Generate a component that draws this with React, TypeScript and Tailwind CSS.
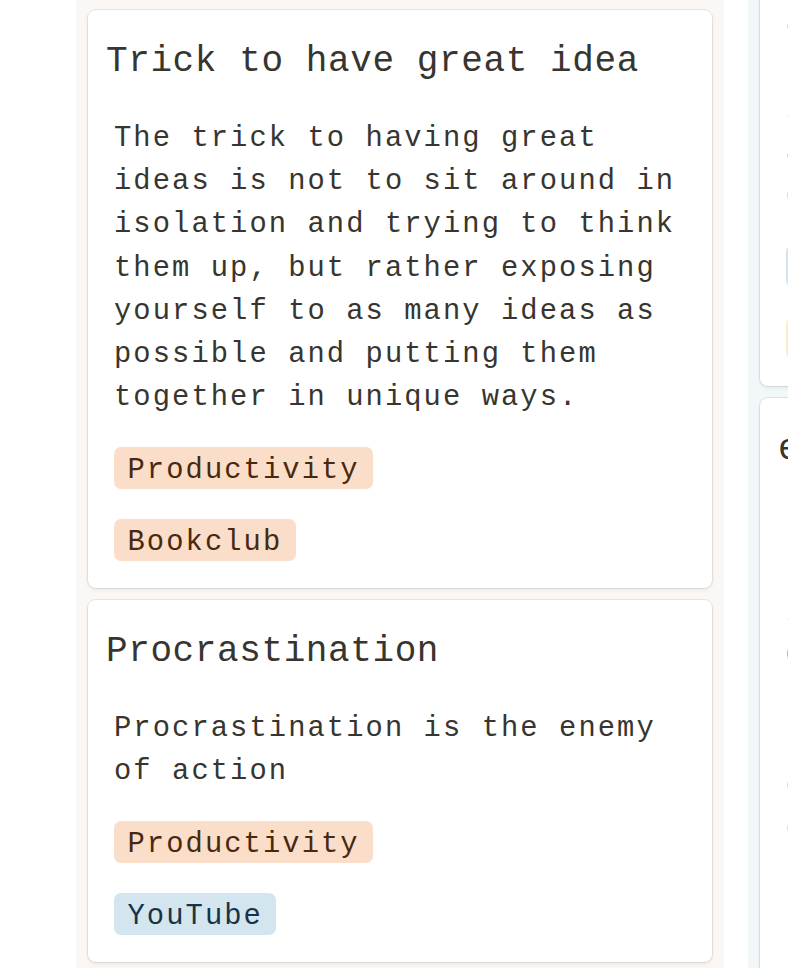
import React from "react";

type TagColor = "orange" | "blue" | "yellow";

const tagClass: Record<TagColor, string> = {
  orange: "bg-[#fadec9] text-[#49290e]",
  blue: "bg-[#d3e5ef] text-[#183347]",
  yellow: "bg-[#fdecc8] text-[#402c1b]",
};

function Tag({ label, color }: { label: string; color: TagColor }) {
  return (
    <span
      className={`inline-block h-[42px] px-[13.5px] pt-[5px] rounded-[7px] text-[28.8px] leading-[37px] tracking-[2.07px] whitespace-nowrap ${tagClass[color]}`}
    >
      {label}
    </span>
  );
}

function Card({
  title,
  body,
  tags,
}: {
  title: string;
  body: string;
  tags: { label: string; color: TagColor }[];
}) {
  return (
    <div className="bg-white rounded-[8px] shadow-[0_0_0_1px_rgba(15,15,15,0.08),0_2px_4px_rgba(15,15,15,0.07)] pt-[25px] pb-[27px] px-[18px]">
      <div className="text-[36px] leading-[54px] tracking-[0.6px] whitespace-nowrap">
        {title}
      </div>
      <div className="px-[8px]">
        <p className="mt-[28px] text-[28.8px] leading-[43.2px] tracking-[2.07px]">
          {body}
        </p>
        <div className="mt-[27.5px] flex flex-col items-start gap-[30px]">
          {tags.map((t, i) => (
            <Tag key={i} label={t.label} color={t.color} />
          ))}
        </div>
      </div>
    </div>
  );
}

export default function App() {
  return (
    <div className="w-[788px] h-[968px] overflow-hidden bg-white flex items-start pl-[76px] gap-[24px] font-['Liberation_Mono',monospace] text-[#37352f]">
      <div className="w-[648px] shrink-0 self-stretch bg-[#fbf7f4] px-[12px] pt-[10px] flex flex-col gap-[12px]">
        <Card
          title="Trick to have great idea"
          body="The trick to having great ideas is not to sit around in isolation and trying to think them up, but rather exposing yourself to as many ideas as possible and putting them together in unique ways."
          tags={[
            { label: "Productivity", color: "orange" },
            { label: "Bookclub", color: "orange" },
          ]}
        />
        <Card
          title="Procrastination"
          body="Procrastination is the enemy of action"
          tags={[
            { label: "Productivity", color: "orange" },
            { label: "YouTube", color: "blue" },
          ]}
        />
      </div>
      <div className="w-[648px] shrink-0 -mt-[115.5px] bg-[#f2f7fa] px-[12px] pt-[10px] flex flex-col gap-[12px]">
        <Card
          title="Write to think"
          body="as you write, notes become the medium of thinking, and ideas connect in surprising and useful ways once enough of them are collected."
          tags={[
            { label: "YouTube", color: "blue" },
            { label: "Learning", color: "yellow" },
          ]}
        />
        <Card
          title="essentialism"
          body="It is not enough to be busy. so are the ants. The question is: what are we busy about? Consider what is essential, remove the rest, and create a system to make doing the essential things as effortless as possible. less but better, every single day, repeated over a lifetime."
          tags={[
            { label: "Productivity", color: "orange" },
            { label: "Bookclub", color: "orange" },
          ]}
        />
      </div>
    </div>
  );
}
